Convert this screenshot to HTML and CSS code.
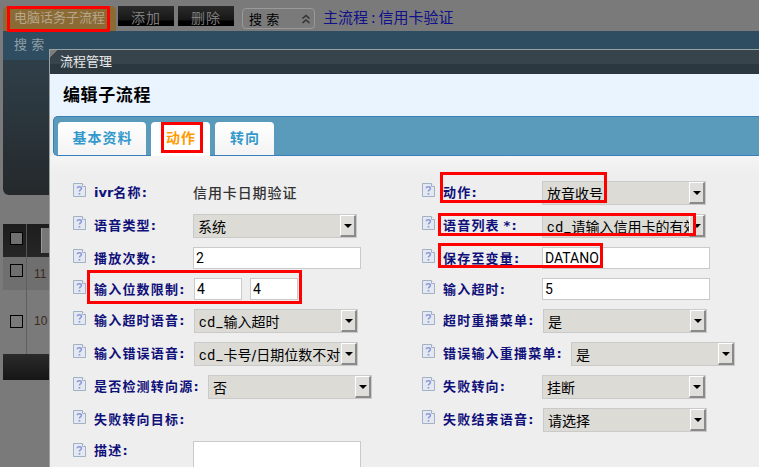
FILE: index.html
```html
<!DOCTYPE html>
<html lang="zh-CN">
<head>
<meta charset="utf-8">
<title>流程管理</title>
<link rel="stylesheet" href="styles.css">
</head>
<body>
<svg class="defs" width="0" height="0" aria-hidden="true">
  <symbol id="help" viewBox="0 0 13 14">
    <path d="M.5.5H9.5L12.5 3.5V13.5H.5Z" fill="#e4e9f1" stroke="#a3b1c4"/>
    <path d="M9.5.5V3.5H12.5" fill="#fff" stroke="#a3b1c4"/>
    <path d="M4.2 5.2C4.3 3.4 8.4 3.3 8.4 5.4C8.4 6.9 6.4 6.8 6.4 8.6" fill="none" stroke="#8c96dc" stroke-width="1.5"/>
    <path d="M5.6 10H7.3V11.6H5.6Z" fill="#8c96dc"/>
  </symbol>
</svg>

<header class="toolbar">
  <div class="tab-main">电脑话务子流程</div>
  <div class="tool-btn">添加</div>
  <div class="tool-btn">删除</div>
  <div class="tool-search">
    <span>搜 索</span>
    <svg class="chev" width="12" height="12" viewBox="0 0 12 12"><path d="M2.5 5.5L6 2.5L9.5 5.5M2.5 10L6 7L9.5 10" fill="none" stroke="#333" stroke-width="1.6"/></svg>
  </div>
  <div class="crumb">主流程 : 信用卡验证</div>
</header>

<section class="search-panel">
  <div class="search-head">搜 索</div>
  <div class="search-body"></div>
</section>

<section class="list">
  <div class="list-head"><span class="check"></span><span class="sort-btn"></span></div>
  <div class="list-row row-a"><span class="cell-check"><span class="check"></span></span><span class="num">11</span></div>
  <div class="list-row row-b"><span class="cell-check"><span class="check"></span></span><span class="num">10</span></div>
  <div class="list-foot"></div>
</section>

<section class="modal">
  <div class="modal-title"><span class="corner"></span>流程管理</div>
  <h1 class="modal-heading">编辑子流程</h1>
  <nav class="tabs">
    <div class="tab">基本资料</div>
    <div class="tab tab-active">动作</div>
    <div class="tab">转向</div>
  </nav>
  <div class="form">
    <div class="col col-left">
      <div class="row"><svg class="help"><use href="#help"/></svg><span class="label w99"><span class="lat-label">ivr</span>名称:</span><span class="plain">信用卡日期验证</span></div>
      <div class="row"><svg class="help"><use href="#help"/></svg><span class="label w99">语音类型:</span><div class="select"><span class="select-text">系统</span><span class="arrow"></span></div></div>
      <div class="row"><svg class="help"><use href="#help"/></svg><span class="label w99">播放次数:</span><input class="input" value="2"></div>
      <div class="row"><svg class="help"><use href="#help"/></svg><span class="label w100">输入位数限制:</span><input class="input small" value="4"><input class="input small gap8" value="4"></div>
      <div class="row"><svg class="help"><use href="#help"/></svg><span class="label w100">输入超时语音:</span><div class="select"><span class="select-text"><span class="latin">cd_</span>输入超时</span><span class="arrow"></span></div></div>
      <div class="row"><svg class="help"><use href="#help"/></svg><span class="label w100">输入错误语音:</span><div class="select"><span class="select-text"><span class="latin">cd_</span>卡号/日期位数不对</span><span class="arrow"></span></div></div>
      <div class="row"><svg class="help"><use href="#help"/></svg><span class="label w114">是否检测转向源:</span><div class="select"><span class="select-text">否</span><span class="arrow"></span></div></div>
      <div class="row row-empty"><svg class="help"><use href="#help"/></svg><span class="label w114">失败转向目标:</span></div>
      <div class="row row-area"><svg class="help"><use href="#help"/></svg><span class="label w99">描述:</span><textarea class="input area"></textarea></div>
    </div>
    <div class="col col-right">
      <div class="row"><svg class="help"><use href="#help"/></svg><span class="label w99">动作:</span><div class="select"><span class="select-text">放音收号</span><span class="arrow"></span></div></div>
      <div class="row"><svg class="help"><use href="#help"/></svg><span class="label w99 tight">语音列表 *:</span><div class="select"><span class="select-text"><span class="latin">cd_</span>请输入信用卡的有效</span><span class="arrow"></span></div></div>
      <div class="row"><svg class="help"><use href="#help"/></svg><span class="label w99">保存至变量:</span><input class="input" value="DATANO"></div>
      <div class="row"><svg class="help"><use href="#help"/></svg><span class="label w99">输入超时:</span><input class="input" value="5"></div>
      <div class="row"><svg class="help"><use href="#help"/></svg><span class="label w100">超时重播菜单:</span><div class="select"><span class="select-text">是</span><span class="arrow"></span></div></div>
      <div class="row"><svg class="help"><use href="#help"/></svg><span class="label w128">错误输入重播菜单:</span><div class="select"><span class="select-text">是</span><span class="arrow"></span></div></div>
      <div class="row"><svg class="help"><use href="#help"/></svg><span class="label w99">失败转向:</span><div class="select"><span class="select-text">挂断</span><span class="arrow"></span></div></div>
      <div class="row"><svg class="help"><use href="#help"/></svg><span class="label w100">失败结束语音:</span><div class="select"><span class="select-text">请选择</span><span class="arrow"></span></div></div>
    </div>
  </div>
</section>

<div class="mark mark-1"></div>
<div class="mark mark-2"></div>
<div class="mark mark-3"></div>
<div class="mark mark-4"></div>
<div class="mark mark-5"></div>
<div class="mark mark-6"></div>
</body>
</html>
```
FILE: styles.css
```css
* { box-sizing: border-box; }
html, body { margin: 0; padding: 0; }
body {
  position: relative;
  width: 759px;
  height: 467px;
  overflow: hidden;
  background: #7a7a7a;
  font-family: "DejaVu Sans", "Noto Sans CJK SC", sans-serif;
}
.defs { position: absolute; }

.toolbar {
  display: flex;
  align-items: flex-start;
  height: 31px;
  padding: 6px 0 0 3px;
}
.tab-main {
  width: 113px;
  height: 25px;
  padding-left: 11px;
  background: #8c6a33;
  border-radius: 5px 5px 0 0;
  color: #b4a78f;
  font-size: 13px;
  line-height: 23px;
}
.tool-btn {
  width: 56px;
  height: 20px;
  margin-left: 2px;
  margin-right: 2px;
  background: linear-gradient(#2b2b2b 0, #161616 72%, #000 73%, #000 100%);
  color: #7d7d7d;
  font-size: 14px;
  line-height: 24px;
  letter-spacing: 1px;
  text-align: center;
  overflow: hidden;
}
.tool-search {
  display: flex;
  align-items: center;
  justify-content: space-between;
  width: 73px;
  height: 21px;
  margin: 2px 0 0 6px;
  padding: 0 2px 0 6px;
  border: 1px solid #9a9a9a;
  border-radius: 4px;
  background: #7a7a7a;
  color: #000;
  font-size: 13px;
}
.crumb {
  margin: 0 0 0 8px;
  color: #10108a;
  font-size: 15px;
  line-height: 25px;
  word-spacing: -2px;
}

.search-panel { margin-left: 3px; }
.search-head {
  height: 29px;
  padding-left: 11px;
  background: #2e4d60;
  color: #8f9ea7;
  font-size: 13px;
  line-height: 27px;
}
.search-body {
  height: 135px;
  background: linear-gradient(#2f3f49, #25292c);
  border-radius: 0 0 0 6px;
}

.list { margin: 29px 0 0 3px; }
.list-head {
  display: flex;
  height: 33px;
  background: linear-gradient(#555, #555) 23px 0 / 1px 100% no-repeat, linear-gradient(#1d1d1d, #262626);
}
.list-head .check { margin: 8px 0 0 7px; background: #6f6f6f; }
.sort-btn {
  width: 30px;
  height: 25px;
  margin: 4px 0 0 18px;
  background: #777;
  border-left: 1px solid #999;
}
.check {
  display: block;
  width: 13px;
  height: 13px;
  border: 1px solid #000;
}
.list-row { display: flex; }
.row-a { height: 33px; background: #6f6f6f; }
.row-b { height: 64px; background: #7a7a7a; }
.cell-check {
  width: 24px;
  padding: 7px 0 0 7px;
  border-right: 1px solid #5f5f5f;
}
.row-b .cell-check { padding-top: 25px; }
.num {
  padding: 10px 0 0 7px;
  color: #3a2a20;
  font-family: "Liberation Sans", sans-serif;
  font-size: 12px;
  line-height: 14px;
}
.row-b .num { padding-top: 24px; }
.list-foot { height: 26px; background: linear-gradient(#2a2a2a, #161616); }

.modal {
  position: absolute;
  left: 49px;
  top: 49px;
  width: 710px;
  height: 418px;
  overflow: hidden;
  border-top: 1px solid #9aa1a2;
  border-left: 1px solid #9aa1a2;
  background: #eee;
}
.modal-title {
  position: relative;
  height: 24px;
  padding-left: 10px;
  background: linear-gradient(#37444b 0, #37444b 58%, #2c3840 59%, #2c3840 100%);
  color: #e8e8e8;
  font-size: 13px;
  line-height: 23px;
}
.corner {
  position: absolute;
  left: 0;
  top: 0;
  width: 8px;
  height: 8px;
  background: linear-gradient(135deg, #7d7d7d 50%, transparent 50%);
}
.modal-heading {
  height: 42px;
  margin: 0;
  padding-left: 13px;
  background: #e9f4ff;
  color: #000;
  font-size: 17px;
  font-weight: 700;
  line-height: 43px;
  letter-spacing: .6px;
}
.tabs {
  display: flex;
  gap: 5px;
  height: 40px;
  margin-left: 3px;
  padding: 5px 0 0 4px;
  background: #5a9aba;
  border: 1px solid #3a7fbb;
  border-right: 0;
  border-radius: 5px 0 0 5px;
}
.tab {
  width: 88px;
  height: 33px;
  padding-left: 1px;
  background: linear-gradient(#fff, #f3f3f3);
  border-radius: 4px 4px 0 0;
  color: #3399cc;
  font-size: 14px;
  font-weight: 700;
  letter-spacing: 1px;
  line-height: 32px;
  text-align: center;
}
.tab-active {
  width: 59px;
  height: 34px;
  background: #fff;
  color: #f90;
}
.tab:last-child { width: 59px; }

.form {
  display: flex;
  height: 311px;
  padding: 25px 0 0 23px;
  background: linear-gradient(#f5f5f5 0, #eee 18px);
}
.col { display: flex; flex-direction: column; gap: 9px; }
.col-left { width: 349px; }
.row {
  position: relative;
  display: flex;
  flex: none;
  align-items: center;
  min-height: 22px;
  padding-left: 21px;
}
.row-empty { min-height: 24px; }
.help {
  position: absolute;
  left: 0;
  top: 2px;
  width: 13px;
  height: 14px;
}
.label {
  flex: none;
  color: #10107a;
  font-size: 13px;
  font-weight: 700;
  letter-spacing: 1.2px;
  line-height: 16px;
  white-space: nowrap;
}
.row:has(.input) .label { margin-top: 2px; }
.lat-label { letter-spacing: 0; }
.tight { word-spacing: -2px; }
.w99 { width: 99px; }
.w100 { width: 100px; }
.w114 { width: 114px; }
.w128 { width: 128px; }
.plain {
  height: 24px;
  color: #333;
  font-size: 14px;
  font-weight: 500;
  letter-spacing: .9px;
  line-height: 24px;
}
.select {
  position: relative;
  width: 164px;
  height: 24px;
  background: #dcdbd6;
  border: 1px solid #cacaca;
  overflow: hidden;
}
.select-text {
  display: block;
  width: 147px;
  padding-left: 4px;
  overflow: hidden;
  color: #000;
  font-size: 14px;
  line-height: 25px;
  white-space: nowrap;
}
.latin { font-family: Roboto, sans-serif; letter-spacing: 1px; }
.arrow {
  position: absolute;
  right: 0;
  top: 0;
  width: 16px;
  height: 22px;
  background: #dfdeda;
  border-top: 1px solid #fff;
  border-left: 1px solid #fff;
  border-right: 2px solid #8a8a8a;
  border-bottom: 2px solid #8a8a8a;
}
.arrow::after {
  content: "";
  position: absolute;
  left: 3px;
  top: 8px;
  border: 4px solid transparent;
  border-top-color: #000;
  border-bottom-width: 0;
}
.input {
  display: block;
  width: 168px;
  height: 22px;
  padding: 0 2px;
  margin: 0;
  background: #fff;
  border: 1px solid #cacaca;
  border-radius: 0;
  color: #000;
  font: 14px Roboto, sans-serif;
  outline: 0;
}
.small { width: 48px; }
.gap8 { margin-left: 8px; }
.area { height: 26px; border-bottom: 0; resize: none; }
.row-area { align-items: flex-start; }
.row-area .label { margin-top: 4px; }

.mark {
  position: absolute;
  border: 3px solid #f00;
}
.mark-1 { left: 7px; top: 6px; width: 103px; height: 26px; }
.mark-2 { left: 161px; top: 122px; width: 42px; height: 31px; }
.mark-3 { left: 87px; top: 270px; width: 215px; height: 34px; }
.mark-4 { left: 440px; top: 172px; width: 167px; height: 31px; }
.mark-5 { left: 438px; top: 213px; width: 258px; height: 23px; }
.mark-6 { left: 438px; top: 243px; width: 165px; height: 25px; }
```
